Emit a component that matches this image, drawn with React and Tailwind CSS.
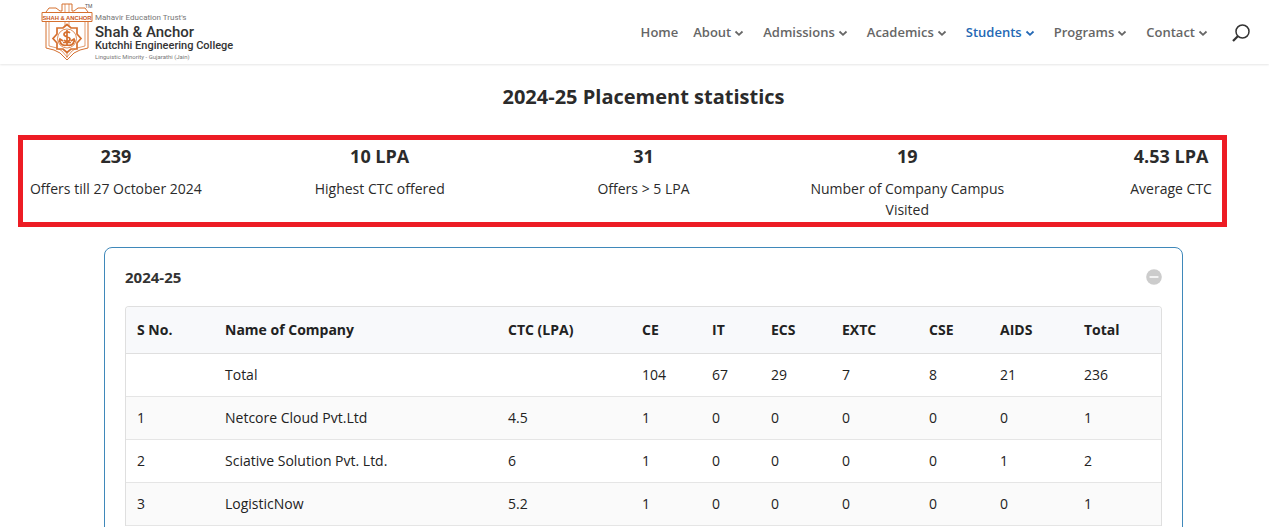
import { useState } from 'react';

const navItems = [
    { label: 'Home' },
    { label: 'About', menu: true },
    { label: 'Admissions', menu: true },
    { label: 'Academics', menu: true },
    { label: 'Students', menu: true, active: true },
    { label: 'Programs', menu: true },
    { label: 'Contact', menu: true },
];

const stats = [
    { value: '239', label: 'Offers till 27 October 2024' },
    { value: '10 LPA', label: 'Highest CTC offered' },
    { value: '31', label: 'Offers > 5 LPA' },
    { value: '19', label: 'Number of Company Campus Visited' },
    { value: '4.53 LPA', label: 'Average CTC' },
];

const columns = [
    { label: 'S No.', width: 'w-[88px]' },
    { label: 'Name of Company', width: 'w-[283px]' },
    { label: 'CTC (LPA)', width: 'w-[134px]' },
    { label: 'CE', width: 'w-[70px]' },
    { label: 'IT', width: 'w-[59px]' },
    { label: 'ECS', width: 'w-[71px]' },
    { label: 'EXTC', width: 'w-[87px]' },
    { label: 'CSE', width: 'w-[71px]' },
    { label: 'AIDS', width: 'w-[84px]' },
    { label: 'Total', width: 'w-[88px]' },
];

const rows = [
    ['', 'Total', '', '104', '67', '29', '7', '8', '21', '236'],
    ['1', 'Netcore Cloud Pvt.Ltd', '4.5', '1', '0', '0', '0', '0', '0', '1'],
    ['2', 'Sciative Solution Pvt. Ltd.', '6', '1', '0', '0', '0', '0', '1', '2'],
    ['3', 'LogisticNow', '5.2', '1', '0', '0', '0', '0', '0', '1'],
];

function Crest() {
    return (
        <svg viewBox="0 0 52 62" className="w-[52px] h-[62px] shrink-0" fill="none" stroke="#d5702f" aria-hidden="true">
            <path d="M5 12 8 8h7l4 3h2V4h10v7h2l4-3h7l3 4" />
            <path d="M5 22v26l8 2 6 3 7 7 7-7 6-3 8-2V22" />
            <path d="M8 22v24l8 2 5 3 5 6 5-6 5-3 8-2V22M24 4v8M28 4v8M24 22v4M28 22v4M26 53v5" strokeWidth="0.7" />
            <path d="M1 12.500h50v9H1z" fill="#fff" />
            <text x="26" y="19.500" textAnchor="middle" fill="#c9581b" stroke="none" fontFamily="Liberation Sans" fontSize="5.8" fontWeight="700">
                SHAH &amp; ANCHOR
            </text>
            <path d="M26 24.500l4 3.500h6v6l4 4.500-4 4.500v6h-6l-4 3.500-4-3.500h-6v-6l-4-4.500 4-4.500v-6h6z" fill="#fff" strokeWidth="1.7" />
            <circle cx="26" cy="38.500" r="9.500" strokeWidth="0.8" />
            <path d="M29 33c-2-2-6-1-6 1.500s6 2 6 4.500-4 3-6 1M26 30v15M18.500 40c1 5 4 6 7.500 5 3.500 1 6.500 0 7.500-5M18 42l1-3 3 2M34 42l-1-3-3 2M22 42.500h8" strokeWidth="1.7" />
        </svg>
    );
}

function Logo() {
    return (
        <a href="#home" className="flex items-start gap-[2px] font-[Roboto,sans-serif] whitespace-nowrap">
            <Crest />
            <span className="relative flex flex-col pt-[11px]">
                <span className="absolute -left-[10px] top-[2px] text-[5px] leading-[8px] text-[#555]">TM</span>
                <span className="text-[8px] leading-[13px] text-[#777]">Mahavir Education Trust&apos;s</span>
                <span className="text-[15px] leading-[16px] font-medium text-[#333]">Shah &amp; Anchor</span>
                <span className="text-[11px] leading-[12px] font-medium text-[#333]">Kutchhi Engineering College</span>
                <span className="text-[6px] leading-[10px] text-[#777]">Linguistic Minority - Gujarathi (Jain)</span>
            </span>
        </a>
    );
}

function Header() {
    return (
        <header className="flex justify-between h-16 pl-[41px] pr-[19px] bg-white shadow-[0_1px_2px_rgba(0,0,0,0.1)]">
            <Logo />
            <div className="flex items-center gap-5 pt-[2px]">
                <nav className="flex items-center gap-[15px] text-[13px] font-semibold">
                    {navItems.map((item) => (
                        <a
                            key={item.label}
                            href={`#${item.label.toLowerCase()}`}
                            className={item.active ? 'flex items-center text-[#2468b4]' : 'flex items-center text-[#666]'}
                        >
                            {item.label}
                            {item.menu && (
                                <svg viewBox="0 0 10 10" className="w-[10px] h-[10px] mx-[3px] mr-1" fill="none" stroke="currentColor" strokeWidth="1.8" aria-hidden="true">
                                    <path d="M1.500 3.500 5 6.800 8.500 3.500" />
                                </svg>
                            )}
                        </a>
                    ))}
                </nav>
                <button type="button" aria-label="Search">
                    <svg viewBox="0 0 18 18" className="w-[18px] h-[18px]" fill="none" stroke="#333" aria-hidden="true">
                        <circle cx="10.500" cy="7.500" r="6.500" strokeWidth="1.5" />
                        <path d="M5.800 12.200 1 17" strokeWidth="2.2" />
                    </svg>
                </button>
            </div>
        </header>
    );
}

function Stats() {
    return (
        <section className="relative mt-6 pt-2 pb-[7px]">
            <div className="grid grid-cols-5 gap-x-[68px] text-center">
                {stats.map((stat) => (
                    <div key={stat.label}>
                        <h2 className="text-[18px] leading-[26px] font-bold">{stat.value}</h2>
                        <p className="mt-[9px] text-sm leading-[21px]">{stat.label}</p>
                    </div>
                ))}
            </div>
            {/* Highlight frame over the figures */}
            <div className="absolute inset-y-0 left-0 right-[42px] border-[5px] border-[#ed1c24] pointer-events-none" />
        </section>
    );
}

function PlacementTable() {
    return (
        <div className="border border-b-0 border-[#dfdfdf] rounded-t overflow-hidden">
            <table className="w-full table-fixed text-sm text-left text-[#222]">
                <thead>
                    <tr className="h-[46px] bg-[#f8f9fb] border-b border-[#dfdfdf]">
                        {columns.map((col) => (
                            <th key={col.label} scope="col" className={`${col.width} px-[11px] font-bold`}>
                                {col.label}
                            </th>
                        ))}
                    </tr>
                </thead>
                <tbody>
                    {rows.map((row) => (
                        <tr key={row[0]} className="h-[43px] border-b border-[#e5e5e5] even:bg-[#fafafa]">
                            {row.map((cell, i) => (
                                <td key={columns[i].label} className="px-[11px]">{cell}</td>
                            ))}
                        </tr>
                    ))}
                </tbody>
            </table>
        </div>
    );
}

export default function App() {
    const [open, setOpen] = useState(true);

    return (
        <div className="min-h-screen bg-white text-[#2b2b2b] font-['Open_Sans',sans-serif]">
            <Header />
            <main className="pl-[18px]">
                <h1 className="pt-[19px] text-center text-xl leading-7 font-bold">2024-25 Placement statistics</h1>
                <Stats />

                {/* Yearly accordion */}
                <section className="mx-[86px] mt-5 px-5 pt-[19px] pb-5 border border-[#3f88ba] rounded-lg">
                    <button
                        type="button"
                        aria-expanded={open}
                        onClick={() => setOpen(!open)}
                        className="flex items-center justify-between w-full mb-[19px] text-[15px] leading-5 font-bold text-[#333]"
                    >
                        2024-25
                        <svg viewBox="0 0 16 16" className="w-4 h-4" aria-hidden="true">
                            <circle cx="8" cy="8" r="7.800" fill="#ccc" />
                            <path d={open ? 'M4 8h8' : 'M4 8h8M8 4v8'} stroke="#fff" strokeWidth="1.3" strokeLinecap="round" />
                        </svg>
                    </button>
                    {open && <PlacementTable />}
                </section>
            </main>
        </div>
    );
}
